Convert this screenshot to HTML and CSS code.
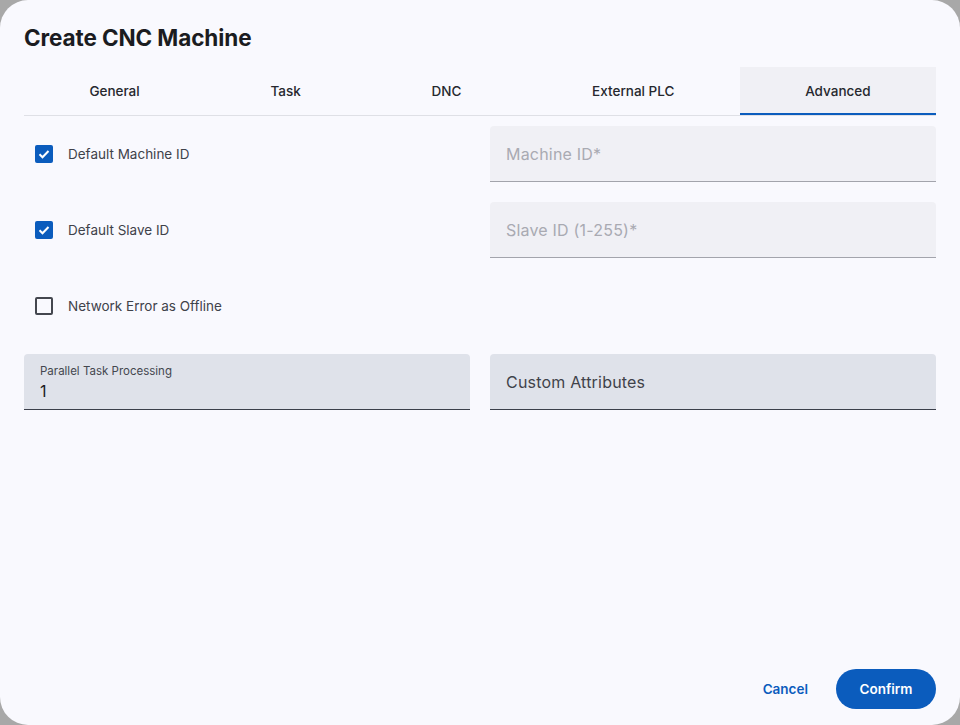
FILE: index.html
```html
<!DOCTYPE html>
<html lang="en">
<head>
  <meta charset="UTF-8" />
  <title>Create CNC Machine</title>
  <link rel="stylesheet" href="styles.css">
</head>
<body>
  <div class="dialog">
    <h1>Create CNC Machine</h1>

    <nav class="tabs">
      <div class="tab">General</div>
      <div class="tab">Task</div>
      <div class="tab">DNC</div>
      <div class="tab">External PLC</div>
      <div class="tab active">Advanced</div>
    </nav>

    <main class="form">
      <label class="check">
        <span class="box on"><svg viewBox="0 0 18 18"><path d="M4.5 9.3l3 3 6-6.3" fill="none" stroke="#fff" stroke-width="2"/></svg></span>
        Default Machine ID
      </label>
      <div class="field disabled"><span class="ph">Machine ID*</span></div>

      <label class="check">
        <span class="box on"><svg viewBox="0 0 18 18"><path d="M4.5 9.3l3 3 6-6.3" fill="none" stroke="#fff" stroke-width="2"/></svg></span>
        Default Slave ID
      </label>
      <div class="field disabled"><span class="ph">Slave ID (1-255)*</span></div>

      <label class="check">
        <span class="box"></span>
        Network Error as Offline
      </label>
      <div></div>

      <div class="field filled">
        <span class="small">Parallel Task Processing</span>
        <span class="value">1</span>
      </div>
      <div class="field filled"><span class="ph dark">Custom Attributes</span></div>
    </main>

    <footer class="actions">
      <button class="btn text">Cancel</button>
      <button class="btn primary">Confirm</button>
    </footer>
  </div>
</body>
</html>
```

FILE: styles.css
```css
:root{
  --bg:#f9f9fe;
  --blue:#0b5cbd;
  --text:#1b1c21;
  --muted:#3f424a;
}
*{box-sizing:border-box;}
html,body{height:100%;}
body{
  margin:0;
  background:#a8a8a8;
  font-family:Inter,"Noto Sans",sans-serif;
  color:var(--text);
}

.dialog{
  height:100%;
  background:var(--bg);
  border-radius:28px;
  padding:24px 24px 16px;
  display:flex;
  flex-direction:column;
}
h1{margin:0 0 15px;font-size:22.5px;font-weight:700;line-height:28px;letter-spacing:-.1px;}

/* tabs */
.tabs{
  display:flex;
  border-bottom:1px solid #dfe0e6;
}
.tab{
  flex:1 1 auto;
  height:48px;
  display:flex;
  align-items:center;
  justify-content:center;
  font-size:13.5px;
  font-weight:500;
  color:#26282e;
}
.tab.active{
  background:#f0f0f5;
  border-bottom:2px solid var(--blue);
  margin-bottom:-1px;
  padding-top:1px;
}

/* form */
.form{
  display:grid;
  grid-template-columns:1fr 1fr;
  grid-auto-rows:56px;
  column-gap:20px;
  row-gap:20px;
  margin-top:10px;
}
.check{
  display:flex;
  align-items:center;
  gap:15px;
  padding-left:11px;
  font-size:13.5px;
  color:var(--muted);
}
.box{
  width:18px;height:18px;
  border:2px solid #44474f;
  border-radius:2px;
  display:flex;
}
.box.on{background:var(--blue);border:none;}
.box svg{width:18px;height:18px;}

.field{
  border-radius:4px 4px 0 0;
  padding:0 16px;
  display:flex;
  flex-direction:column;
  justify-content:center;
}
.field.disabled{
  background:#f0f0f5;
  border-bottom:1px solid #a3a4ac;
}
.field.filled{
  background:#dfe2ea;
  border-bottom:1px solid #3b3f4a;
}
.ph{font-size:16px;color:#a9aab2;letter-spacing:.2px;}
.ph.dark{color:#3f424a;}
.small{font-size:11.5px;color:#44474f;margin-top:2px;}
.value{font-size:16px;color:#1b1c21;margin-top:3px;}

/* footer */
.actions{
  margin-top:auto;
  display:flex;
  justify-content:flex-end;
  align-items:center;
  gap:8px;
}
.btn{
  font-family:inherit;
  font-size:13.5px;
  font-weight:600;
  height:40px;
  border-radius:20px;
  border:none;
  cursor:pointer;
}
.btn.text{background:transparent;color:var(--blue);padding:0 20px;}
.btn.primary{background:var(--blue);color:#fff;width:100px;}
```
